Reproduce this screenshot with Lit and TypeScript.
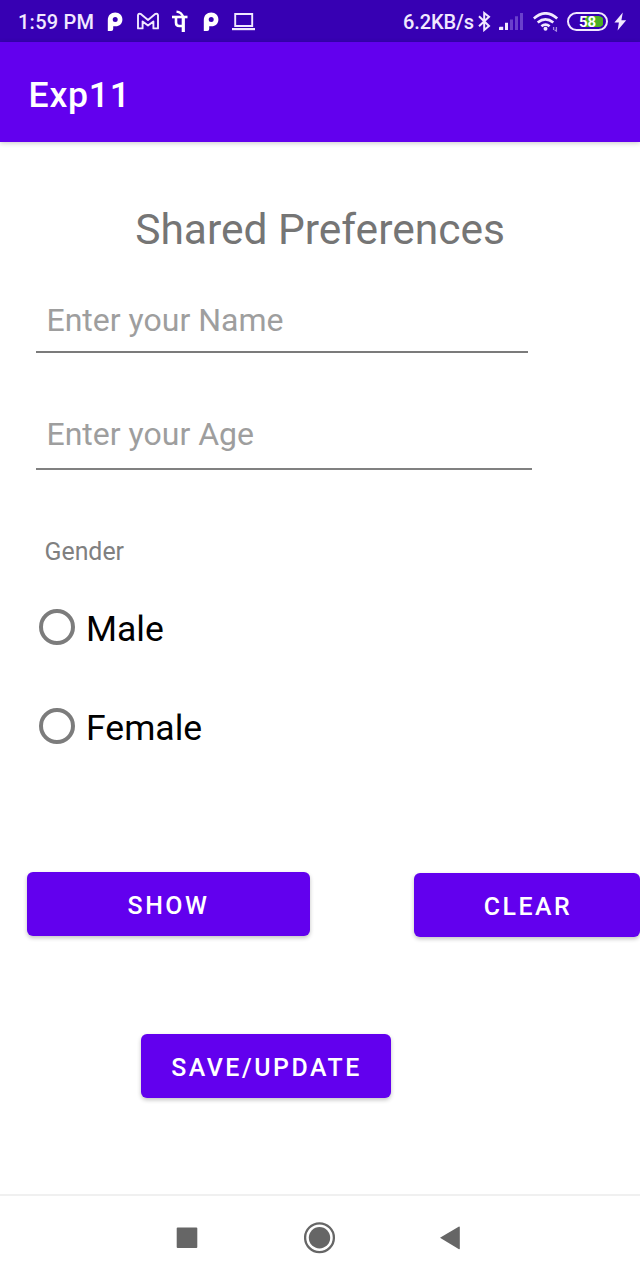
import { LitElement, html, css } from "lit";
import { customElement, property } from "lit/decorators.js";

const payLogo = html`<svg width="16" height="20" viewBox="0 0 16 20">
  <path fill="#fff" fill-rule="evenodd" d="M.8 19V8.2C.8 3.4 4 .6 8.2 .6C12.6 .6 15.4 3.5 15.4 7.5C15.4 11.7 12.5 14.3 8.6 14.3H6.2V17Q6.2 19 4.2 19ZM8.2 5A2.5 2.5 0 1 0 8.2 10A2.5 2.5 0 1 0 8.2 5Z" />
</svg>`;

@customElement("status-bar")
export class StatusBar extends LitElement {
  static styles = css`
    :host {
      display: flex;
      justify-content: space-between;
      height: 42px;
      background: #3700b3;
      color: #f1e8ff;
      font: 500 20px/45px Roboto, sans-serif;
    }
    .left, .right { display: flex; align-items: flex-start; }
    .left { padding-left: 18px; }
    .right { padding-right: 13px; }
    .time { width: 89px; white-space: nowrap; letter-spacing: 0.25px; }
    .rate { width: 75px; white-space: nowrap; letter-spacing: -0.1px; }
    svg { display: block; flex: none; margin-top: 12px; }
    .mail { margin-left: 14px; }
    .pe { margin: 10px 0 0 13px; }
    .second { margin-left: 14px; }
    .laptop { margin-left: 13px; }
    .bt { margin-top: 11px; }
    .signal { margin-left: 8px; }
    .wifi { margin-left: 9px; }
    .battery {
      box-sizing: border-box;
      width: 41px;
      height: 19px;
      margin: 12px 0 0 8px;
      border: 2px solid #f1e8ff;
      border-radius: 10px;
      padding: 2px;
    }
    .charge {
      height: 11px;
      border-radius: 6px;
      background: linear-gradient(90deg, #3700b3 42%, #4caf22 42%, #4caf22 96%, #3700b3 96%);
      color: #fff;
      font-size: 15px;
      font-weight: 700;
      line-height: 12px;
      text-align: center;
    }
    .bolt { margin-left: 6px; }
  `;

  render() {
    return html`
      <div class="left">
        <span class="time">1:59 PM</span>
        ${payLogo}
        <svg class="mail" width="22" height="19" viewBox="0 0 22 19" fill="none" stroke="#f1e8ff" stroke-width="1.9" stroke-linejoin="round">
          <path d="M1 16.4V3.2Q1.4 1.3 3.5 1.8L11 8L18.5 1.8Q20.6 1.3 21 3.2V16.4H16.4V9.4L11 13.6L5.6 9.4V16.4Z" />
        </svg>
        <svg class="pe" width="17" height="23" viewBox="0 0 17 23" fill="none" stroke="#fff">
          <path d="M0 7H15.5" stroke-width="2.6" />
          <path d="M4.5 1.6Q9.5 2 11.2 7" stroke-width="2.4" />
          <path d="M4 7V12.5Q4 16 7.2 16H11" stroke-width="2.6" />
          <path d="M11.3 7V22" stroke-width="3.2" />
        </svg>
        <span class="second">${payLogo}</span>
        <svg class="laptop" width="24" height="19" viewBox="0 0 24 19">
          <path d="M3.2 2H20.2V14H3.2Z" fill="none" stroke="#f1e8ff" stroke-width="1.9" />
          <path d="M0 16H23V18.2H0Z" fill="#f1e8ff" />
        </svg>
      </div>
      <div class="right">
        <span class="rate">6.2KB/s</span>
        <svg class="bt" width="13" height="21" viewBox="0 0 13 21" fill="none" stroke="#f1e8ff" stroke-width="2">
          <path d="M1 5.3L11 15L6.2 19V2L11 5.8L1 15.3" />
        </svg>
        <svg class="signal" width="25" height="19" viewBox="0 0 25 19">
          <path d="M0 15.9Q0 14.8 1 14.8H4.2V18H0ZM6 10.8H9V18H6Z" fill="#f1e8ff" />
          <path d="M11 7.4H14V18H11ZM16 4.3H19V18H16ZM21 1H24V18H21Z" fill="#6a40cc" />
        </svg>
        <svg class="wifi" width="26" height="20" viewBox="0 0 26 20" fill="none" stroke="#f1e8ff" stroke-width="2.7">
          <path d="M.8 6.5Q12.5-3.8 24.2 6.5M4.7 10.5Q12.5 4.2 20.3 10.5M8.4 14.3Q12.5 11 16.6 14.3" />
          <circle cx="12.5" cy="16.7" r="2" fill="#f1e8ff" stroke="none" />
          <path d="M20.6 15V18M23.4 15V19L21.6 18" stroke="#a78ae0" stroke-width="1.3" />
        </svg>
        <div class="battery"><div class="charge">58</div></div>
        <svg class="bolt" width="13" height="19" viewBox="0 0 13 19">
          <path d="M8.8 .6L.4 10.6H4.9L3.6 18.4L12.2 8.2H7.4Z" fill="#f1e8ff" />
        </svg>
      </div>
    `;
  }
}

@customElement("text-field")
export class TextField extends LitElement {
  @property() label = "";
  static styles = css`
    :host {
      display: block;
      box-sizing: border-box;
      padding-left: 10.5px;
      color: #9e9e9e;
      font-size: 32px;
      line-height: 40px;
    }
  `;
  render() {
    return html`${this.label}`;
  }
}

@customElement("radio-option")
export class RadioOption extends LitElement {
  @property() label = "";
  static styles = css`
    :host {
      display: flex;
      align-items: flex-start;
      gap: 11px;
      height: 42px;
      color: #000;
      font-size: 35.56px;
      line-height: 42px;
    }
    .ring {
      box-sizing: border-box;
      width: 36px;
      height: 36px;
      margin-top: 1px;
      border: 4px solid #7c7c7c;
      border-radius: 50%;
    }
  `;
  render() {
    return html`<span class="ring"></span><span>${this.label}</span>`;
  }
}

@customElement("app-root")
export class AppRoot extends LitElement {
  static styles = css`
    :host {
      display: flex;
      flex-direction: column;
      width: 640px;
      height: 1280px;
      overflow: hidden;
      background: #fff;
      font-family: Roboto, sans-serif;
    }
    .appbar {
      flex: none;
      height: 100px;
      padding-left: 28.5px;
      box-sizing: border-box;
      background: #6200ee;
      color: #fff;
      font-size: 35.56px;
      font-weight: 500;
      line-height: 107px;
      letter-spacing: 0.8px;
      box-shadow: 0 1px 5px rgba(0, 0, 0, 0.22);
    }
    .content { flex: 1; display: flex; flex-direction: column; min-height: 0; }
    h1 {
      margin: 63px 0 0;
      text-align: center;
      color: #757575;
      font-size: 42.5px;
      font-weight: 400;
      line-height: 50px;
    }
    .name, .age { margin-left: 36px; }
    .name { width: 492px; height: 53px; margin-top: 45px; border-bottom: 2px solid #7b7b7b; }
    .age { width: 496px; height: 56px; margin-top: 61px; border-bottom: 2px solid #808080; }
    .gender {
      margin: 67px 0 0 44.5px;
      color: #808080;
      font-size: 24.89px;
      line-height: 30px;
    }
    .options { display: flex; flex-direction: column; gap: 57px; margin: 41px 0 0 39px; }
    .row { display: flex; align-items: flex-start; margin: 123px 0 0 26.5px; }
    .btn {
      box-sizing: border-box;
      flex: none;
      height: 64px;
      padding: 0;
      border: 0;
      border-radius: 6px;
      background: #6200ee;
      color: #fff;
      font: 500 24.89px/67px Roboto, sans-serif;
      letter-spacing: 2.55px;
      text-align: center;
      box-shadow: 0 2px 4px rgba(0, 0, 0, 0.24);
    }
    .show { width: 283px; padding-left: 1px; }
    .clear { width: 226px; margin: 1px 0 0 104.5px; padding-left: 2px; }
    .save { width: 250px; margin: 97px 0 0 141px; padding-left: 1px; }
    .nav {
      flex: none;
      box-sizing: border-box;
      display: flex;
      height: 86px;
      border-top: 2px solid #f0f0f0;
      padding: 26px 0 0 176px;
    }
    .nav svg { display: block; fill: #666; }
    .home { margin-left: 106px; }
    .home .outline { fill: none; }
    .back { margin-left: 104px; }
  `;

  render() {
    return html`
      <status-bar></status-bar>
      <header class="appbar">Exp11</header>
      <main class="content">
        <h1>Shared Preferences</h1>
        <text-field class="name" label="Enter your Name"></text-field>
        <text-field class="age" label="Enter your Age"></text-field>
        <div class="gender">Gender</div>
        <div class="options">
          <radio-option label="Male"></radio-option>
          <radio-option label="Female"></radio-option>
        </div>
        <div class="row">
          <button class="btn show">SHOW</button>
          <button class="btn clear">CLEAR</button>
        </div>
        <button class="btn save">SAVE/UPDATE</button>
      </main>
      <nav class="nav">
        <svg width="22" height="32" viewBox="0 0 22 32"><rect x=".7" y="5.4" width="20.6" height="20.6" rx="1" /></svg>
        <svg class="home" width="32" height="32" viewBox="0 0 32 32">
          <circle class="outline" cx="15.5" cy="15.7" r="14.4" stroke="#666" stroke-width="2.3" />
          <circle cx="15.5" cy="15.7" r="10.7" />
        </svg>
        <svg class="back" width="20" height="32" viewBox="0 0 20 32"><path d="M0 15.8L18.6 4.7Q19.8 4.2 19.8 5.4V26.4Q19.8 27.6 18.6 27Z" /></svg>
      </nav>
    `;
  }
}
